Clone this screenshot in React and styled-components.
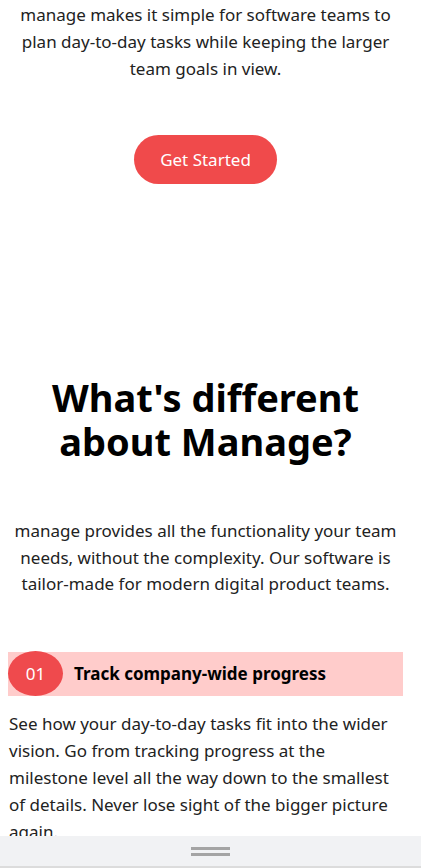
import React from "react";
import styled, { createGlobalStyle } from "styled-components";

const GlobalStyle = createGlobalStyle`
  html, body {
    margin: 0;
    padding: 0;
    background: #ffffff;
  }
  body {
    font-family: "Noto Sans", "Open Sans", sans-serif;
    color: #111111;
  }
`;

const Page = styled.main`
  width: 395px;
  margin-left: 8px;
  padding: 1px 0 60px;
`;

const Hero = styled.section`
  display: flex;
  flex-direction: column;
  align-items: center;
  text-align: center;
`;

const Lead = styled.p`
  margin: 0;
  max-width: 380px;
  font-size: 17px;
  line-height: 27px;
  color: #222;
`;

const CtaButton = styled.button`
  margin-top: 53px;
  height: 49px;
  padding: 0 26px;
  border: none;
  border-radius: 25px;
  background: #f04a4b;
  color: #ffffff;
  font-family: inherit;
  font-size: 17px;
  font-weight: 400;
  cursor: pointer;
`;

const Different = styled.section`
  margin-top: 191px;
  display: flex;
  flex-direction: column;
  align-items: center;
  text-align: center;
`;

const Title = styled.h2`
  margin: 0;
  font-size: 38px;
  line-height: 44px;
  font-weight: 700;
  color: #000;
`;

const Intro = styled.p`
  margin: 55px 0 0;
  max-width: 390px;
  font-size: 17px;
  line-height: 26.5px;
  color: #222;
`;

const Feature = styled.article`
  margin-top: 54px;
`;

const FeatureHead = styled.div`
  display: flex;
  align-items: center;
  gap: 11px;
  height: 44px;
  background: #ffcccb;
`;

const Badge = styled.span`
  flex: none;
  display: flex;
  align-items: center;
  justify-content: center;
  width: 55px;
  height: 45px;
  border-radius: 50%;
  background: #ef4a4d;
  color: #fff;
  font-size: 17px;
`;

const FeatureTitle = styled.h3`
  margin: 0;
  font-size: 17px;
  font-weight: 700;
  color: #000;
`;

const FeatureText = styled.p`
  margin: 14px 0 0;
  padding-left: 1px;
  font-size: 17px;
  line-height: 27px;
  color: #222;
`;

const SheetBar = styled.div`
  position: fixed;
  left: 0;
  right: 0;
  bottom: 0;
  height: 30px;
  background: #f1f2f4;
  border-bottom: 2px solid #dcdcdc;
  display: flex;
  flex-direction: column;
  align-items: center;
  justify-content: center;
  gap: 3px;
`;

const Grip = styled.span`
  width: 39px;
  height: 3px;
  background: #a4a4a4;
`;

export default function App() {
  return (
    <>
      <GlobalStyle />
      <Page>
        <Hero>
          <Lead>
            manage makes it simple for software teams to plan day-to-day tasks
            while keeping the larger team goals in view.
          </Lead>
          <CtaButton>Get Started</CtaButton>
        </Hero>

        <Different>
          <Title>
            What's different
            <br />
            about Manage?
          </Title>
          <Intro>
            manage provides all the functionality your team needs, without the
            complexity. Our software is tailor-made for modern digital product
            teams.
          </Intro>
        </Different>

        <Feature>
          <FeatureHead>
            <Badge>01</Badge>
            <FeatureTitle>Track company-wide progress</FeatureTitle>
          </FeatureHead>
          <FeatureText>
            See how your day-to-day tasks fit into the wider vision. Go from
            tracking progress at the milestone level all the way down to the
            smallest of details. Never lose sight of the bigger picture again.
          </FeatureText>
        </Feature>
      </Page>
      <SheetBar>
        <Grip />
        <Grip />
      </SheetBar>
    </>
  );
}
